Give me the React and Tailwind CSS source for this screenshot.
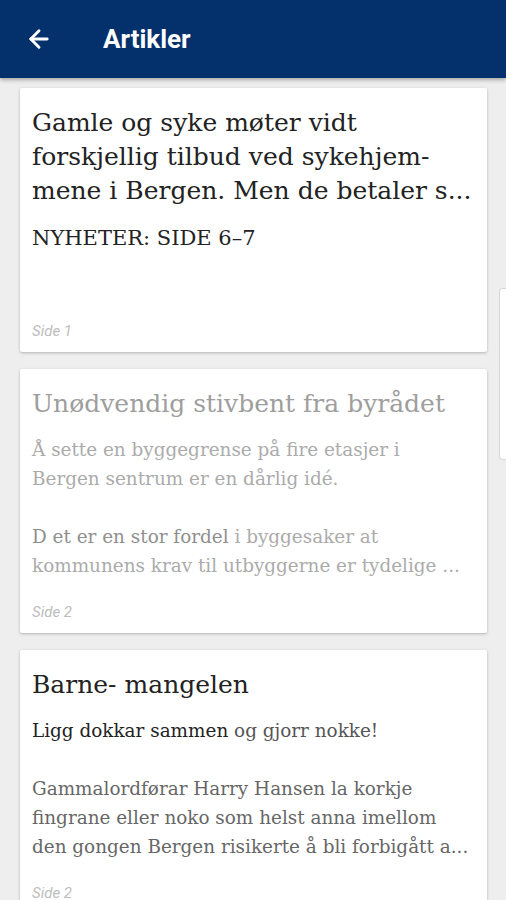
import { ArrowLeft } from 'lucide-react';

const Card = ({ children, page }) => (
    <div className="bg-white rounded-[2px] shadow-[0_1px_3px_rgba(0,0,0,0.25)] px-3 pt-[18px] pb-[10px] flex flex-col min-h-[264px]">
        <div className="flex-1">{children}</div>
        <p className="text-[15px] italic text-[#bdbdbd] mt-2 font-[family-name:Roboto,sans-serif]">{page}</p>
    </div>
);

const App = () => {
    return (
        <div className="relative w-[506px] h-[900px] overflow-hidden bg-[#eeeeee] font-[family-name:DejaVu_Serif,Liberation_Serif,serif]">
            {/* Toolbar */}
            <header className="h-[78px] bg-[#04306b] flex items-center shadow-[0_2px_4px_rgba(0,0,0,0.3)] relative z-10">
                <ArrowLeft className="w-7 h-7 text-white ml-[25px]" strokeWidth={2.5} />
                <h1 className="text-white text-[26px] font-bold ml-[50px] font-[family-name:Roboto,sans-serif]">Artikler</h1>
            </header>

            {/* Articles */}
            <div className="flex flex-col gap-[17px] pl-[20px] pr-[19px] pt-[10px]">
                <Card page="Side 1">
                    <h2 className="text-[25px] leading-[34px] text-[#222]">
                        Gamle og syke møter vidt forskjellig tilbud ved sykehjem‐ mene i Bergen. Men de betaler s...
                    </h2>
                    <p className="text-[21px] leading-[30px] text-[#222] mt-[15px]">NYHETER: SIDE 6–7</p>
                </Card>

                <Card page="Side 2">
                    <h2 className="text-[25px] leading-[34px] text-[#9e9e9e]">
                        Unødvendig stivbent fra byrådet
                    </h2>
                    <p className="text-[18.4px] leading-[29px] text-[#ababab] mt-[14px]">
                        Å sette en byggegrense på fire etasjer i<br />Bergen sentrum er en dårlig idé.
                    </p>
                    <p className="text-[18.4px] leading-[29px] text-[#ababab] mt-[29px]">
                        <span className="text-[#8f8f8f]">D et er en stor fordel</span> i byggesaker at kommunens krav til utbyggerne er tydelige ...
                    </p>
                </Card>

                <Card page="Side 2">
                    <h2 className="text-[25px] leading-[34px] text-[#222]">
                        Barne‐ mangelen
                    </h2>
                    <p className="text-[18.4px] leading-[29px] text-[#555] mt-[14px]">
                        <span className="text-[#222]">Ligg dokkar sammen</span> og gjorr nokke!
                    </p>
                    <p className="text-[18.4px] leading-[29px] text-[#666] mt-[29px]">
                        Gammalordførar Harry Hansen la korkje fingrane eller noko som helst anna imellom den gongen Bergen risikerte å bli forbigått a...
                    </p>
                </Card>
            </div>

            {/* Drawer handle */}
            <div className="absolute right-0 top-[288px] w-[7px] h-[172px] bg-white border border-r-0 border-[#d6d6d6] rounded-l-[4px]" />
        </div>
    );
};

export default App;
